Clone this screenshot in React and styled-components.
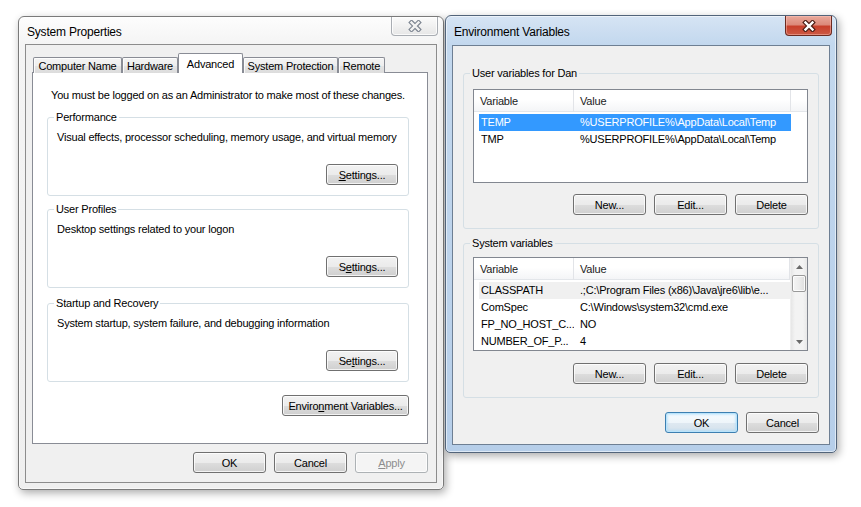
import React from "react";
import styled, { createGlobalStyle } from "styled-components";

const GlobalStyle = createGlobalStyle`
  html, body {
    margin: 0;
    padding: 0;
    background: #fff;
  }
  body {
    font-family: "Liberation Sans", Arial, sans-serif;
    font-size: 11px;
    letter-spacing: -0.2px;
    color: #000;
  }
  * {
    box-sizing: border-box;
  }
`;

const Desktop = styled.div`
  position: relative;
  width: 861px;
  height: 507px;
  overflow: hidden;
  background: #fff;
`;

// windows on the desktop are the only absolutely placed things
const Frame = styled.div`
  position: absolute;
  left: ${(p) => p.$x}px;
  top: ${(p) => p.$y}px;
  width: ${(p) => p.$w}px;
  height: ${(p) => p.$h}px;
  z-index: ${(p) => (p.$active ? 2 : 1)};
  display: flex;
  flex-direction: column;
  padding: 0 6px ${(p) => p.$bottom}px;
  border: 1px solid ${(p) => (p.$active ? "#52647a" : "#7a7a7a")};
  border-radius: 6px 6px 5px 5px;
  background: ${(p) =>
    p.$active
      ? "linear-gradient(to bottom, #d6e4f4 0%, #c3d8ee 28px, #b6cee9 100%)"
      : "linear-gradient(to bottom, #fdfdfd 0%, #f4f4f4 28px, #efefef 100%)"};
  box-shadow: inset 0 0 0 1px rgba(255, 255, 255, 0.55),
    2px 3px 9px rgba(0, 0, 0, 0.33);
`;

const TitleBar = styled.div`
  height: ${(p) => p.$h}px;
  flex: none;
  display: flex;
  align-items: flex-start;
  justify-content: space-between;
  padding-left: 2px;
`;

const Title = styled.div`
  font-size: 12px;
  line-height: 14px;
  margin-top: ${(p) => p.$top}px;
  color: #000;
`;

const CloseBtn = styled.div`
  width: 47px;
  height: ${(p) => (p.$active ? 20 : 19)}px;
  margin-right: ${(p) => (p.$active ? -2 : -1)}px;
  display: flex;
  align-items: center;
  justify-content: center;
  border: 1px solid ${(p) => (p.$active ? "#6b2a20" : "#a9adb3")};
  border-top: none;
  border-radius: 0 0 4px 4px;
  background: ${(p) =>
    p.$active
      ? "linear-gradient(to bottom, #e9a99b 0%, #dc8a7b 45%, #c8402c 55%, #cc5a45 100%)"
      : "linear-gradient(to bottom, #fbfbfb 0%, #f1f1f1 50%, #e6e6e6 100%)"};
  box-shadow: inset 0 0 0 1px
    ${(p) => (p.$active ? "rgba(255,200,190,0.45)" : "rgba(255,255,255,0.8)")};
`;

const Client = styled.div`
  flex: 1;
  display: flex;
  flex-direction: column;
  min-height: 0;
  border: 1px solid ${(p) => (p.$active ? "#6e7f93" : "#8c8c8c")};
  background: #f0f0f0;
  padding: ${(p) => p.$pad};
`;

const TabStrip = styled.div`
  position: relative;
  z-index: 1;
  height: 20px;
  flex: none;
  display: flex;
  align-items: flex-end;
  padding-left: 1px;
`;

const Tab = styled.div`
  width: ${(p) => p.$w}px;
  height: ${(p) => (p.$selected ? 20 : 16)}px;
  display: flex;
  align-items: center;
  justify-content: center;
  white-space: nowrap;
  border: 1px solid #898c95;
  border-bottom: none;
  border-radius: 2px 2px 0 0;
  background: ${(p) =>
    p.$selected
      ? "#fff"
      : "linear-gradient(to bottom, #f4f4f4 0%, #eeeeee 50%, #e4e4e4 51%, #dcdcdc 100%)"};
  box-shadow: ${(p) => (p.$selected ? "none" : "inset 1px 1px 0 rgba(255,255,255,0.8)")};
`;

const TabPanel = styled.div`
  flex: 1;
  margin-top: -1px;
  display: flex;
  flex-direction: column;
  border: 1px solid #898c95;
  background: #fff;
  padding: 15px 18px 0 14px;
`;

const Intro = styled.div`
  line-height: 14px;
  margin-left: 4px;
`;

const Group = styled.fieldset`
  margin: ${(p) => p.$top}px 0 0;
  padding: 0 ${(p) => p.$right}px ${(p) => p.$bottom}px 9px;
  min-width: 0;
  border: 1px solid #d5dfe5;
  border-radius: 3px;
  display: flex;
  flex-direction: column;
`;

const Legend = styled.legend`
  padding: 0 2px;
  margin-left: -3px;
  line-height: 14px;
`;

const Desc = styled.div`
  line-height: 14px;
  margin-top: 6px;
`;

const ButtonRow = styled.div`
  flex: none;
  display: flex;
  justify-content: flex-end;
  gap: 8px;
  margin-top: ${(p) => p.$top}px;
  padding-right: ${(p) => p.$right || 0}px;
`;

const Button = styled.div`
  width: ${(p) => p.$w}px;
  height: 21px;
  flex: none;
  display: flex;
  align-items: center;
  justify-content: center;
  white-space: nowrap;
  border-radius: 3px;
  border: 1px solid
    ${(p) => (p.$default ? "#3c7fb1" : p.$disabled ? "#adb2b5" : "#707070")};
  color: ${(p) => (p.$disabled ? "#8d8d8d" : "#000")};
  background: ${(p) =>
    p.$disabled
      ? "#f4f4f4"
      : p.$default
      ? "linear-gradient(to bottom, #f6fbfe 0%, #eef5fa 50%, #dfe9f1 51%, #d3e1ec 100%)"
      : "linear-gradient(to bottom, #f2f2f2 0%, #ebebeb 50%, #dddddd 51%, #cfcfcf 100%)"};
  box-shadow: ${(p) =>
    p.$default
      ? "inset 0 0 0 1px #b9e3fb, inset 0 0 2px 2px rgba(150, 215, 250, 0.45)"
      : "inset 0 0 0 1px rgba(255, 255, 255, 0.75)"};
`;

const U = styled.span`
  text-decoration: underline;
  text-underline-offset: 1px;
`;

const Spacer = styled.div`
  height: ${(p) => p.$h}px;
  flex: none;
`;

const ListBox = styled.div`
  height: 94px;
  flex: none;
  display: flex;
  border: 1px solid #828790;
  background: #fff;
  overflow: hidden;
`;

const ListMain = styled.div`
  flex: 1;
  min-width: 0;
  display: flex;
  flex-direction: column;
`;

const Header = styled.div`
  height: 22px;
  flex: none;
  display: grid;
  grid-template-columns: ${(p) => p.$cols};
  background: linear-gradient(to bottom, #ffffff 0%, #ffffff 45%, #f4f5f7 100%);
  border-bottom: 1px solid #e3e6ea;
`;

const HeaderCell = styled.div`
  padding-left: 6px;
  line-height: 22px;
  color: #1b1b1b;
  border-right: ${(p) => (p.$last ? "none" : "1px solid #e2e4e8")};
`;

const Rows = styled.div`
  padding: 2px ${(p) => p.$right}px 0 5px;
`;

const Row = styled.div`
  height: 17px;
  display: grid;
  grid-template-columns: 95px 1fr;
  line-height: 17px;
  white-space: nowrap;
  overflow: hidden;
  background: ${(p) =>
    p.$state === "sel" ? "#3399ff" : p.$state === "soft" ? "#f0f0f0" : "transparent"};
  color: ${(p) => (p.$state === "sel" ? "#fff" : "#000")};
`;

const Cell = styled.div`
  padding-left: ${(p) => (p.$value ? 6 : 2)}px;
  overflow: hidden;
`;

const ScrollBar = styled.div`
  width: 17px;
  flex: none;
  display: flex;
  flex-direction: column;
  background: linear-gradient(to right, #e6e6e6 0%, #f3f3f3 25%, #f3f3f3 75%, #e8e8e8 100%);
  border-left: 1px solid #efefef;
`;

const ScrollArrow = styled.div`
  height: 17px;
  flex: none;
  display: flex;
  align-items: center;
  justify-content: center;
`;

const Thumb = styled.div`
  height: 17px;
  flex: none;
  margin: 0 1px;
  border: 1px solid #999;
  border-radius: 2px;
  background: linear-gradient(to right, #f4f4f4 0%, #ececec 50%, #dedede 100%);
  box-shadow: inset 0 0 0 1px rgba(255, 255, 255, 0.8);
`;

const ScrollTrack = styled.div`
  flex: 1;
`;

const CloseGlyph = ({ active }) => (
  <svg width="14" height="12" viewBox="0 0 14 12">
    <path
      d="M3.5 2.5 L10.5 9.5 M10.5 2.5 L3.5 9.5"
      stroke={active ? "#4b1d15" : "#7d8591"}
      strokeWidth="4.6"
      strokeLinecap="square"
    />
    <path
      d="M3.5 2.5 L10.5 9.5 M10.5 2.5 L3.5 9.5"
      stroke={active ? "#ffffff" : "#f3f3f3"}
      strokeWidth="2.4"
      strokeLinecap="square"
    />
  </svg>
);

const Arrow = ({ down }) => (
  <svg width="7" height="4" viewBox="0 0 7 4">
    <polygon points={down ? "0,0 7,0 3.5,4" : "0,4 7,4 3.5,0"} fill="#6a6a6a" />
  </svg>
);

const Window = ({ x, y, w, h, bottom, titleH, titleTop, active, title, pad, children }) => (
  <Frame $x={x} $y={y} $w={w} $h={h} $bottom={bottom} $active={active}>
    <TitleBar $h={titleH}>
      <Title $top={titleTop}>{title}</Title>
      <CloseBtn $active={active}>
        <CloseGlyph active={active} />
      </CloseBtn>
    </TitleBar>
    <Client $active={active} $pad={pad}>
      {children}
    </Client>
  </Frame>
);

const tabs = [
  { label: "Computer Name", w: 89 },
  { label: "Hardware", w: 56 },
  { label: "Advanced", w: 65, selected: true },
  { label: "System Protection", w: 95 },
  { label: "Remote", w: 47 },
];

const groups = [
  {
    title: "Performance",
    desc: "Visual effects, processor scheduling, memory usage, and virtual memory",
    btn: (
      <>
        <U>S</U>ettings...
      </>
    ),
    top: 8,
  },
  {
    title: "User Profiles",
    desc: "Desktop settings related to your logon",
    btn: (
      <>
        S<U>e</U>ttings...
      </>
    ),
    top: 6,
  },
  {
    title: "Startup and Recovery",
    desc: "System startup, system failure, and debugging information",
    btn: (
      <>
        Se<U>t</U>tings...
      </>
    ),
    top: 8,
  },
];

const userVars = [
  { name: "TEMP", value: "%USERPROFILE%\\AppData\\Local\\Temp", state: "sel" },
  { name: "TMP", value: "%USERPROFILE%\\AppData\\Local\\Temp" },
];

const systemVars = [
  { name: "CLASSPATH", value: ".;C:\\Program Files (x86)\\Java\\jre6\\lib\\e...", state: "soft" },
  { name: "ComSpec", value: "C:\\Windows\\system32\\cmd.exe" },
  { name: "FP_NO_HOST_C...", value: "NO" },
  { name: "NUMBER_OF_P...", value: "4" },
];

const VarList = ({ items, scroll }) => (
  <ListBox>
    <ListMain>
      <Header $cols={scroll ? "100px 1fr" : "100px 217px 1fr"}>
        <HeaderCell>Variable</HeaderCell>
        <HeaderCell>Value</HeaderCell>
        {!scroll && <HeaderCell $last />}
      </Header>
      <Rows $right={scroll ? 0 : 16}>
        {items.map((item, i) => (
          <Row key={i} $state={item.state}>
            <Cell>{item.name}</Cell>
            <Cell $value>{item.value}</Cell>
          </Row>
        ))}
      </Rows>
    </ListMain>
    {scroll && (
      <ScrollBar>
        <ScrollArrow>
          <Arrow />
        </ScrollArrow>
        <Thumb />
        <ScrollTrack />
        <ScrollArrow>
          <Arrow down />
        </ScrollArrow>
      </ScrollBar>
    )}
  </ListBox>
);

const VarButtons = ({ top }) => (
  <ButtonRow $top={top}>
    <Button $w={73}>New...</Button>
    <Button $w={73}>Edit...</Button>
    <Button $w={73}>Delete</Button>
  </ButtonRow>
);

export default function App() {
  return (
    <Desktop>
      <GlobalStyle />

      <Window
        x={18}
        y={16}
        w={426}
        h={474}
        bottom={6}
        titleH={27}
        titleTop={8}
        title="System Properties"
        pad="8px 8px 9px 6px"
      >
        <TabStrip>
          {tabs.map((t) => (
            <Tab key={t.label} $w={t.w} $selected={t.selected}>
              {t.label}
            </Tab>
          ))}
        </TabStrip>
        <TabPanel>
          <Intro>You must be logged on as an Administrator to make most of these changes.</Intro>
          {groups.map((g) => (
            <Group key={g.title} $top={g.top} $right={10} $bottom={10}>
              <Legend>{g.title}</Legend>
              <Desc>{g.desc}</Desc>
              <ButtonRow $top={20}>
                <Button $w={72}>{g.btn}</Button>
              </ButtonRow>
            </Group>
          ))}
          <ButtonRow $top={13}>
            <Button $w={127}>
              Enviro<U>n</U>ment Variables...
            </Button>
          </ButtonRow>
        </TabPanel>
        <ButtonRow $top={8}>
          <Button $w={73}>OK</Button>
          <Button $w={73}>Cancel</Button>
          <Button $w={73} $disabled>
            <U>A</U>pply
          </Button>
        </ButtonRow>
      </Window>

      <Window
        active
        x={445}
        y={15}
        w={392}
        h={438}
        bottom={7}
        titleH={29}
        titleTop={9}
        title="Environment Variables"
        pad="20px 10px 0 10px"
      >
        <Group $top={0} $right={10} $bottom={13}>
          <Legend>User variables for Dan</Legend>
          <Spacer $h={9} />
          <VarList items={userVars} />
          <VarButtons top={11} />
        </Group>
        <Group $top={7} $right={10} $bottom={13}>
          <Legend>System variables</Legend>
          <Spacer $h={7} />
          <VarList items={systemVars} scroll />
          <VarButtons top={12} />
        </Group>
        <ButtonRow $top={14}>
          <Button $w={73} $default>
            OK
          </Button>
          <Button $w={73}>Cancel</Button>
        </ButtonRow>
      </Window>
    </Desktop>
  );
}
